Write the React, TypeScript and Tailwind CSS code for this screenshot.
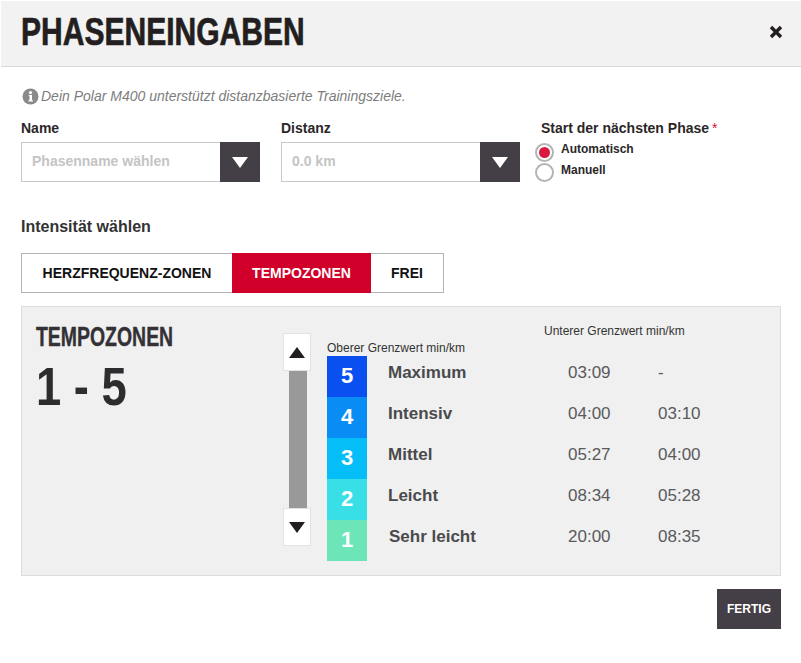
const ZONEN = [
  { nr: 5, name: 'Maximum', von: '03:09', bis: '-', farbe: 'bg-[#0a50f0]' },
  { nr: 4, name: 'Intensiv', von: '04:00', bis: '03:10', farbe: 'bg-[#0a8cf5]' },
  { nr: 3, name: 'Mittel', von: '05:27', bis: '04:00', farbe: 'bg-[#05bdf7]' },
  { nr: 2, name: 'Leicht', von: '08:34', bis: '05:28', farbe: 'bg-[#38dfe6]' },
  { nr: 1, name: 'Sehr leicht', von: '20:00', bis: '08:35', farbe: 'bg-[#6ce5b8]' },
]

function Caret({ up = false, className = '' }: { up?: boolean; className?: string }) {
  return (
    <svg width="16" height="11" viewBox="0 0 16 11" className={className}>
      <path d={up ? 'M8 0L16 11H0Z' : 'M0 0H16L8 11Z'} fill="currentColor" />
    </svg>
  )
}

function SelectBox({ label, placeholder, width }: { label: string; placeholder: string; width: string }) {
  return (
    <div className={width}>
      <div className="text-[14px] leading-[16px] font-bold text-[#2b2729] mb-[6px]">{label}</div>
      <div className="flex h-[40px]">
        <div className="flex-1 border border-[#c8c8c8] border-r-0 flex items-center pl-[10px] pb-[2px] text-[14px] font-bold text-[#c4c4c4]">
          {placeholder}
        </div>
        <div className="w-[40px] bg-[#443e46] flex items-center justify-center text-white">
          <Caret />
        </div>
      </div>
    </div>
  )
}

function Radio({ label, checked = false }: { label: string; checked?: boolean }) {
  return (
    <div className="flex items-start h-[20px]">
      <span className="w-[19px] h-[19px] rounded-full border-2 border-[#b4b4b4] bg-white flex items-center justify-center mt-[1px]">
        {checked && <span className="w-[11px] h-[11px] rounded-full bg-[#d9173f]" />}
      </span>
      <span className={`ml-[7px] ${checked ? '-mt-[1px]' : 'mt-0'} text-[12px] leading-[16px] font-bold text-[#2b2729]`}>
        {label}
      </span>
    </div>
  )
}

export default function App() {
  return (
    <div className="w-[801px] h-[663px] bg-white font-['Liberation_Sans',Arial,sans-serif] overflow-hidden">
      {/* Kopf */}
      <div className="h-[66px] ml-px mt-px bg-[#f2f2f2] border-b border-[#d8d8d8] flex items-center justify-between pl-[20px] pr-[18px] pb-[4px]">
        <h1 className="inline-block origin-left scale-x-[0.77] text-[39px] leading-none font-bold text-[#231f20] [-webkit-text-stroke:0.7px_#231f20]">
          PHASENEINGABEN
        </h1>
        <svg width="14" height="14" viewBox="0 0 14 14" className="text-[#231f20]">
          <path d="M2 2L12 12M12 2L2 12" stroke="currentColor" strokeWidth="3.4" />
        </svg>
      </div>

      <div className="pl-[21px] pr-[20px]">
        {/* Hinweis */}
        <div className="flex items-center mt-[20px] h-[18px]">
          <svg width="17" height="17" viewBox="0 0 17 17" className="ml-px">
            <circle cx="8.5" cy="8.5" r="8" fill="#8a8a8a" />
            <circle cx="8.5" cy="4.6" r="1.6" fill="#fff" />
            <path d="M6.8 7H10V12.3H11V13.6H6.4V12.3H7.5V8.3H6.8Z" fill="#fff" />
          </svg>
          <span className="ml-[2px] text-[14px] italic text-[#7d7d7d]">
            Dein Polar M400 unterstützt distanzbasierte Trainingsziele.
          </span>
        </div>

        {/* Felder */}
        <div className="flex mt-[15px]">
          <SelectBox label="Name" placeholder="Phasenname wählen" width="w-[239px]" />
          <div className="w-[21px]" />
          <SelectBox label="Distanz" placeholder="0.0 km" width="w-[239px]" />
          <div className="ml-[21px]">
            <div className="text-[14px] leading-[16px] font-bold text-[#2b2729] mb-[6px]">
              Start der nächsten Phase<span className="ml-[3px] text-[#e0103a] font-normal">*</span>
            </div>
            <div className="-ml-[6px]">
              <Radio label="Automatisch" checked />
              <Radio label="Manuell" />
            </div>
          </div>
        </div>

        {/* Intensitaet */}
        <h2 className="mt-[36px] text-[16px] leading-[18px] font-bold text-[#333]">Intensität wählen</h2>

        <div className="mt-[17px] flex w-[423px] h-[40px] border border-[#b4b4b4] text-[14px] font-bold text-[#111]">
          <div className="w-[210px] flex items-center justify-center">HERZFREQUENZ-ZONEN</div>
          <div className="w-[139px] -my-px bg-[#d0002a] text-white flex items-center justify-center">TEMPOZONEN</div>
          <div className="flex-1 flex items-center justify-center">FREI</div>
        </div>

        {/* Zonen */}
        <div className="mt-[13px] h-[270px] bg-[#f0f0f0] border border-[#dcdcdc] flex">
          <div className="w-[261px] pl-[14px] pt-[14px]">
            <div className="origin-left scale-x-[0.72] text-[27px] leading-[32px] font-bold text-[#333036] whitespace-nowrap [-webkit-text-stroke:0.4px_#333036]">
              TEMPOZONEN
            </div>
            <div className="mt-[3px] origin-left scale-x-[0.84] text-[54px] leading-[60px] font-bold text-[#2f2c30]">1 - 5</div>
          </div>

          {/* Scrollbar */}
          <div className="w-[28px] mt-[26px] flex flex-col items-center">
            <div className="w-[28px] h-[38px] bg-white border border-[#e2e2e2] flex items-center justify-center text-[#231f20]">
              <Caret up />
            </div>
            <div className="w-[18px] h-[137px] ml-[2px] bg-[#999]" />
            <div className="w-[28px] h-[38px] bg-white border border-[#e2e2e2] flex items-center justify-center text-[#231f20]">
              <Caret />
            </div>
          </div>

          <div className="ml-[16px] pt-[17px] w-[400px]">
            <div className="ml-[217px] text-[12px] leading-[14px] text-[#333]">Unterer Grenzwert min/km</div>
            <div className="mt-[3px] mb-[1px] text-[12px] leading-[14px] text-[#333]">Oberer Grenzwert min/km</div>
            {ZONEN.map((z) => (
              <div key={z.nr} className="flex h-[41px] items-center">
                <div className={`w-[40px] h-full ${z.farbe} flex items-center justify-center pb-[2px] text-white text-[22px] font-bold`}>
                  {z.nr}
                </div>
                <div className={`${z.nr === 1 ? 'ml-[22px] w-[179px]' : 'ml-[21px] w-[180px]'} mb-[8px] text-[17px] font-bold text-[#4a4a4c]`}>
                  {z.name}
                </div>
                <div className="w-[90px] mb-[8px] text-[17px] text-[#5a5a5c]">{z.von}</div>
                <div className="mb-[8px] text-[17px] text-[#5a5a5c]">{z.bis}</div>
              </div>
            ))}
          </div>
        </div>

        <div className="mt-[13px] flex justify-end">
          <div className="w-[64px] h-[40px] bg-[#443e46] text-white text-[12px] font-bold flex items-center justify-center">
            FERTIG
          </div>
        </div>
      </div>
    </div>
  )
}
